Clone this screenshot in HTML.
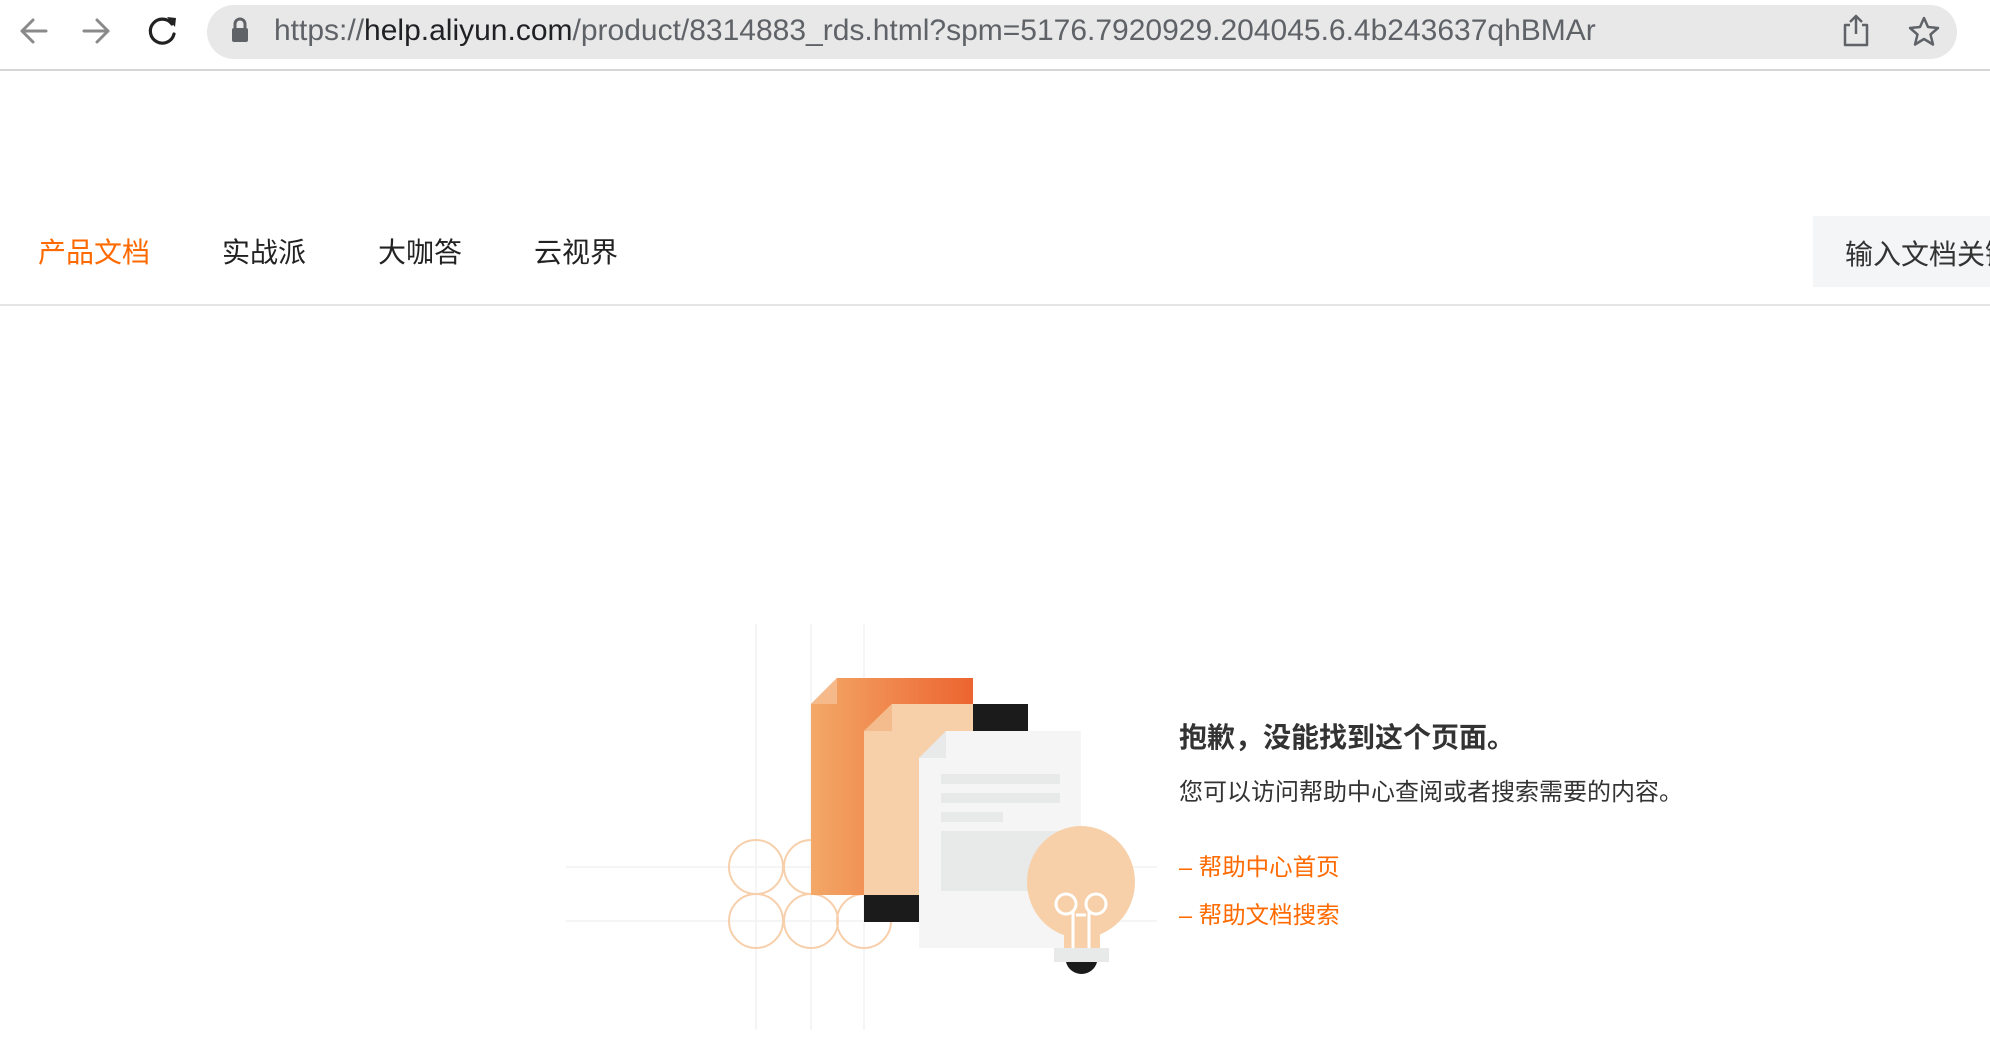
<!DOCTYPE html>
<html><head><meta charset="utf-8"><style>
html,body{margin:0;padding:0;width:1990px;height:1064px;overflow:hidden;background:#fff;font-family:"Liberation Sans","Noto Sans CJK SC",sans-serif;}
.bar{position:absolute;left:0;top:0;width:1990px;height:69px;background:#fff;border-bottom:2px solid #d6d6d6;}
.addr{position:absolute;left:207px;top:5px;width:1750px;height:54px;border-radius:27px;background:#e8e8e8;}
.url{position:absolute;left:274px;top:14px;font-size:30px;color:#5f6368;white-space:nowrap;}
.url b{font-weight:normal;color:#202124}
.nav{position:absolute;top:231px;font-size:28px;color:#222;}
.search{position:absolute;left:1813px;top:216px;width:200px;height:71px;background:#f4f5f6;}
.search span{position:absolute;left:32px;top:17px;font-size:28px;color:#333;white-space:nowrap}
.hr{position:absolute;left:0;top:304px;width:1990px;height:2px;background:#e5e5e5;}
.t{position:absolute;left:1179px;white-space:nowrap}
</style></head><body>
<div class="bar">
<svg width="200" height="69" style="position:absolute;left:0;top:0">
<g fill="none" stroke="#8a8a8a" stroke-width="3" stroke-linecap="round" stroke-linejoin="round">
<path d="M46 31H22M33 20L22 31L33 42"/><path d="M84 31H108M97 20L108 31L97 42"/></g>
<g fill="none" stroke="#222" stroke-width="3.2" stroke-linecap="round"><path d="M172 24A12 12 0 1 0 174 34"/></g>
<path d="M167 17L176 18L175 27Z" fill="#222"/>
</svg>
<div class="addr"></div>
<svg width="30" height="40" style="position:absolute;left:228px;top:12px"><rect x="4" y="16" width="16" height="14" rx="2" fill="#5f6368"/><path d="M7 17V12a5 5 0 0 1 10 0v5" fill="none" stroke="#5f6368" stroke-width="3"/></svg>
<div class="url">https://<b>help.aliyun.com</b>/product/8314883_rds.html?spm=5176.7920929.204045.6.4b243637qhBMAr</div>
<svg width="120" height="69" style="position:absolute;left:1830px;top:0"><g fill="none" stroke="#5f6368" stroke-width="2.5" stroke-linejoin="round"><path d="M20 25h-5v20h22V25h-5M26 16v18M20 22l6-6 6 6"/><path d="M94 18l4 9 10 1-7.5 6.5 2.5 10-9-5.5-9 5.5 2.5-10L80 28l10-1z"/></g></svg>
</div>
<div class="nav" style="left:38px;color:#ff6a00">产品文档</div>
<div class="nav" style="left:222px">实战派</div>
<div class="nav" style="left:378px">大咖答</div>
<div class="nav" style="left:534px">云视界</div>
<div class="search"><span>输入文档关键</span></div>
<div class="hr"></div>
<svg width="1990" height="1064" style="position:absolute;left:0;top:0">
<defs><linearGradient id="g" x1="0" x2="1"><stop offset="0" stop-color="#f3a868"/><stop offset="1" stop-color="#ec6430"/></linearGradient></defs>
<g stroke="#f2f2f2" stroke-width="1.5"><path d="M756 624V1030M811 624V1030M864 624V1030M566 867H1157M566 921H1157"/></g>
<g fill="none" stroke="#f7cfab" stroke-width="2"><circle cx="756" cy="867" r="27"/><circle cx="811" cy="867" r="27"/><circle cx="756" cy="921" r="27"/><circle cx="811" cy="921" r="27"/><circle cx="864" cy="921" r="27"/></g>
<path d="M837 678H973V895H811V704Z" fill="url(#g)"/><path d="M837 678V704H811Z" fill="#f5b98a"/>
<rect x="973" y="704" width="55" height="27" fill="#1b1b1b"/>
<path d="M892 704H973V895H864V731Z" fill="#f7d0a9"/><path d="M892 704V731H864Z" fill="#f4bc8c"/>
<rect x="864" y="895" width="55" height="27" fill="#1b1b1b"/>
<path d="M946 731H1081V948H919V758Z" fill="#f5f5f5"/><path d="M946 731V758H919Z" fill="#e8e9e9"/>
<g fill="#e8e9e9"><rect x="941" y="774" width="119" height="10"/><rect x="941" y="793" width="119" height="10"/><rect x="941" y="812" width="62" height="10"/><rect x="941" y="831" width="119" height="60"/></g>
<ellipse cx="1081" cy="882" rx="54" ry="56" fill="#f7d0a9"/>
<path d="M1063 920Q1081 960 1099 920" fill="#f7d0a9"/>
<rect x="1064" y="910" width="36" height="40" fill="#f7d0a9"/>
<g fill="none" stroke="#fff" stroke-width="3"><circle cx="1066" cy="904" r="10"/><circle cx="1096" cy="904" r="10"/><path d="M1073 912V948M1089 912V948M1076 915H1086"/></g>
<rect x="1054" y="948" width="55" height="14" fill="#e8e9e9"/>
<path d="M1066 962H1097A16 16 0 0 1 1066 962Z" fill="#1b1b1b"/>
</svg>
<div class="t" style="top:716px;font-size:28px;font-weight:bold;color:#333">抱歉，没能找到这个页面。</div>
<div class="t" style="top:772px;font-size:24px;color:#333">您可以访问帮助中心查阅或者搜索需要的内容。</div>
<div class="t" style="top:848px;font-size:23.5px;color:#ff6a00">– 帮助中心首页</div>
<div class="t" style="top:896px;font-size:23.5px;color:#ff6a00">– 帮助文档搜索</div>
</body></html>
